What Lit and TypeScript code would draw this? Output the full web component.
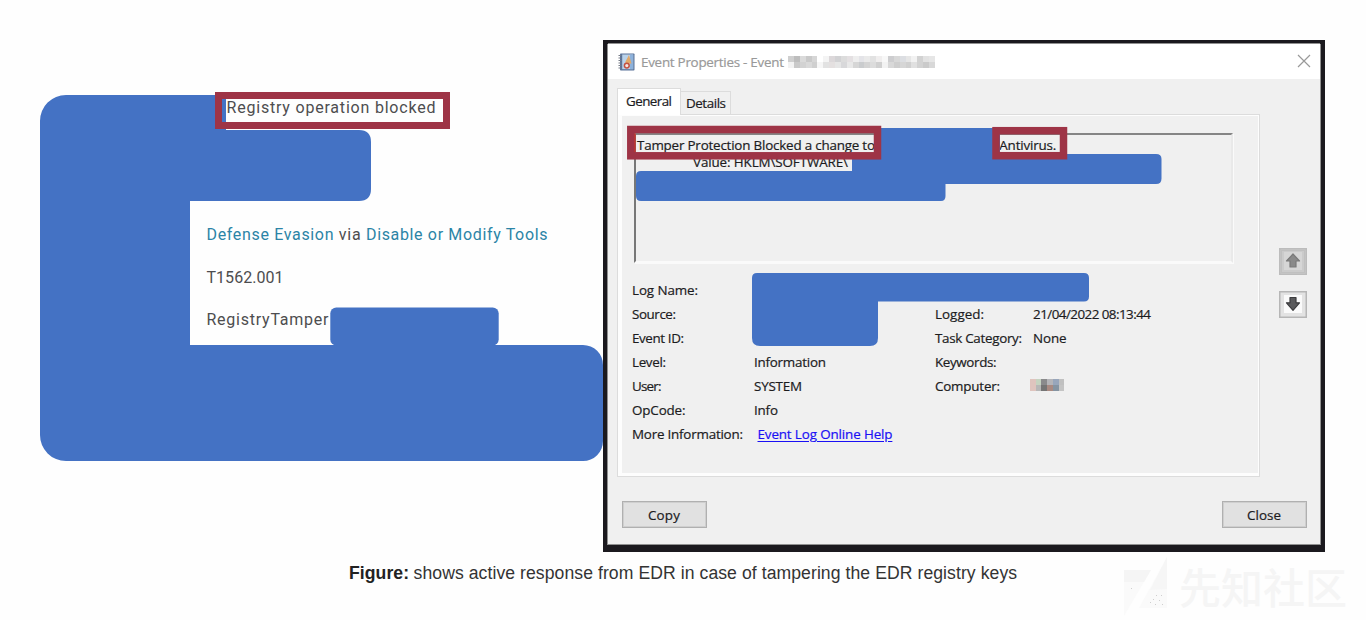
import { LitElement, html, css, svg } from "lit";
import { customElement, property } from "lit/decorators.js";

/** Text run tracked so that it spans a given width. */
@customElement("fit-label")
class FitLabel extends LitElement {
  @property({ type: Number }) span = 0;
  @property() text = "";

  static styles = css`
    :host { display: inline-block; white-space: pre; }
    .run { display: inline-block; text-decoration: inherit; text-underline-offset: inherit; }
  `;

  firstUpdated() {
    const run = this.renderRoot.querySelector(".run") as HTMLElement;
    const natural = run.getBoundingClientRect().width;
    if (this.span) {
      run.style.letterSpacing = `${(this.span - natural) / (this.text.length - 1)}px`;
    }
  }

  render() {
    return html`<span class="run">${this.text}</span>`;
  }
}

const t = (text: string, span: number, cls = "") =>
  html`<fit-label class=${cls} .text=${text} .span=${span}></fit-label>`;

const LEFT_ROWS: [string, number, string, number][] = [
  ["Log Name:", 66, "", 0],
  ["Source:", 44, "", 0],
  ["Event ID:", 52, "", 0],
  ["Level:", 34, "Information", 72],
  ["User:", 29.5, "SYSTEM", 48],
  ["OpCode:", 53.5, "Info", 24],
];
const RIGHT_ROWS: [string, number, string, number][] = [
  ["Logged:", 49, "21/04/2022 08:13:44", 118],
  ["Task Category:", 87, "None", 33.5],
  ["Keywords:", 61.5, "", 0],
  ["Computer:", 65, "", 0],
];

const TITLE_MOSAIC = [
  "#cfcfcf", "#bdbdbd", "#dadada", "#c9c9c9", "#d6d6d6", "#ffffff", "#f4f4f4", "#dcd8da", "#d2d2d4", "#dcdcdc",
  "#e4e0e2", "#eeeeee", "#e4e4e8", "#eaeaea", "#e2e2e2", "#f0eeee", "#f8f8f8", "#cdcdcf", "#d8d8d8", "#dcdee2",
  "#e6e6e6", "#f2f2f2", "#d2d2d2", "#e2e2e2", "#e6e6e6",
];
const TITLE_MOSAIC_LOW = [
  "#f2f2f2", "#c9c9c9", "#d2d2d2", "#d9d9d9", "#cfcfcf", "#f6f6f6", "#e2e2e2", "#e4e0e0", "#e6e6e6", "#d8d8da",
  "#e8e8e8", "#d6d6d6", "#caccce", "#d4d4d4", "#dcdcdc", "#d0d0d0", "#f2f2f2", "#d8d8d8", "#cecece", "#d6d6d6",
  "#d0d0d0", "#e0e0e0", "#d2d2d2", "#cacaca", "#d8d8d8",
];
const HOST_MOSAIC = ["#dfc4be", "#c5d3c0", "#8a8a8c", "#b4b4b8", "#98a6bb", "#c0c0c0"];
const HOST_MOSAIC_LOW = ["#dfc4be", "#b7b7b7", "#757575", "#a98a82", "#8594a2", "#c4c4c4"];

@customElement("app-root")
class AppRoot extends LitElement {
  static styles = css`
    :host { display: block; }
    * { box-sizing: border-box; }
    .page {
      position: relative; width: 1366px; height: 620px; overflow: hidden;
      background: #fefefe; padding: 40px 41px 0 40px;
      display: flex; flex-direction: column;
    }
    .figure { display: flex; height: 512px; }
    .evidence {
      width: 563px; padding: 58px 0 0 166.5px; display: flex; flex-direction: column;
      align-items: flex-start; font: 16px/20px Roboto, sans-serif; color: #4d4d4f;
    }
    .evidence .op { margin-left: 20px; }
    .evidence .row { display: flex; gap: 4.5px; margin-top: 107px; color: #2b84a6; }
    .evidence .via { color: #4d4d4f; }
    .evidence .tech { margin-top: 23px; }
    .evidence .rule { margin-top: 22px; }
    .dialog {
      width: 722px; height: 512px; background: #f0f0f0; border: solid #1b191e;
      border-width: 4px 4px 7px 4px; box-shadow: inset 0 0 0 1px #909090;
      font: 13.4px/16px "Open Sans", sans-serif; color: #1c1c1e;
      -webkit-text-stroke: 0.2px currentColor;
    }
    .titlebar {
      height: 35px; margin: 0 1px; background: #fff; display: flex; align-items: center;
      padding: 0 9px 0 10px; color: #999; box-shadow: 0 -1px 0 #909090;
    }
    .titlebar .name { margin: 0 4px 0 6px; }
    .titlebar .x { margin: -2px 0 0 auto; }
    .body { display: flex; padding: 9px 0 0 10px; }
    .tabs { display: flex; align-items: flex-end; height: 26px; }
    .tab { background: #f0f0f0; border: 1px solid #dcdcdc; border-bottom: 0; }
    .tab.on { width: 64px; height: 27px; margin-bottom: -1px; background: #fff; padding: 4px 0 0 8px; position: relative; }
    .tab.off { width: 50px; height: 23px; padding: 3px 0 0 5px; border-left: 0; }
    .panel { width: 643px; height: 363px; border: 1px solid #dcdcdc; display: flex; }
    .sheet { flex: 1; border: solid #fdfdfd; border-width: 1px 1px 3px 4px; padding: 17px 25px 0 12px; }
    .message {
      height: 130px; border: solid; border-width: 2px 2px 2px 2px;
      border-color: #858585 #e9e9e9 #fafafa #777; padding: 2px 0 0 1px; line-height: 16.5px;
      display: flex; flex-direction: column;
      box-shadow: 1px 1px 0 #fafafa;
    }
    .line { display: flex; }
    .line .anti { margin-left: 124.5px; }
    .line .val { margin-left: 56px; }
    .facts { display: flex; padding-top: 14.6px; line-height: 24.08px; margin-left: -2px; }
    .col { width: 303px; }
    .fact { display: flex; height: 24.08px; align-items: center; }
    .key { width: 122px; }
    .key.wide { width: 125.5px; }
    .col.right { padding-top: 24px; width: 260px; }
    .col.right .key { width: 98px; }
    .link { color: #1a10f5; text-decoration: underline; text-underline-offset: 1.5px; }
    .mosaic { margin: -1px 0 0 -3px; }
    .nav { display: flex; flex-direction: column; gap: 16px; padding: 160px 0 0 19px; }
    .nav svg { display: block; }
    .footer { display: flex; justify-content: space-between; padding: 24px 14px 0 15px; }
    .btn {
      width: 85px; height: 27px; background: #e1e1e1; border: 1px solid #b0b0b0;
      box-shadow: inset 0 0 0 1px #cfcfcf;
      display: flex; justify-content: center; align-items: center; padding: 0 1px 0 0;
    }
    .caption {
      margin-top: 10px; height: 22px; line-height: 22px; padding-left: 309px; white-space: pre;
      font-family: "Liberation Sans", Arial, sans-serif; font-size: 17.6px; color: #333; display: flex;
    }
    .caption .lead { font-weight: 700; margin-right: 4.5px; color: #222; }
    .overlay { position: absolute; left: 0; top: 0; pointer-events: none; }
    .mark {
      position: absolute; left: 1123px; top: 556px; display: flex; align-items: center;
      color: #f5f5f5; font: 500 42px/60px "Noto Sans CJK SC", sans-serif; gap: 11px; height: 60px;
    }
    .mark svg { flex: none; }
  `;

  mosaic(top: string[], low: string[], cell: number, h: number, cls: string) {
    return html`<svg class=${cls} width=${cell * top.length} height=${h * 2} shape-rendering="crispEdges">
      ${top.map((c, i) => svg`<rect x=${i * cell} y="0" width=${cell} height=${h} fill=${c}></rect>`)}
      ${low.map((c, i) => svg`<rect x=${i * cell} y=${h} width=${cell} height=${h} fill=${c}></rect>`)}
    </svg>`;
  }

  eventIcon() {
    return html`<svg width="17" height="18" viewBox="0 0 17 18">
      <rect x="2" y="0.5" width="14.5" height="17" rx="0.8" fill="#5a7399"></rect>
      <rect x="4.2" y="1.5" width="11" height="14.7" fill="#b9d2ea"></rect>
      <rect x="12" y="1.5" width="3.2" height="14.7" fill="#8db2dc"></rect>
      <path d="M0.5 2.5h3M0.5 5h3M0.5 7.5h3M0.5 10h3M0.5 12.5h3M0.5 15h3" stroke="#777d88" stroke-width="1.1"></path>
      <path d="M11 2L13.500 10.500H10L7 9.500Z" fill="#e2a868"></path>
      <circle cx="8.800" cy="12.600" r="2.400" fill="#f4e6e2" stroke="#c4503f" stroke-width="1.500"></circle>
    </svg>`;
  }

  arrow(down: boolean) {
    const edge = down ? "#b6b6b6" : "#bcbcbc";
    return html`<svg width="28" height="27" viewBox="0 0 28 27">
      <rect x="0.75" y="0.75" width="26.5" height="25.5" fill=${down ? "#e3e3e3" : "#cbcbcb"} stroke=${edge} stroke-width="1.5"></rect>
      ${down
        ? svg`<rect x="5" y="4" width="18" height="18" fill="#fafafa"></rect>
            <path d="M11 6.500H17V11.800H20.500L14 19.300L7.500 11.800H11Z" fill="#5a5a5c" stroke="#3c3c3e" stroke-width="1.200" stroke-linejoin="round"></path>`
        : svg`<rect x="2.5" y="2.5" width="23" height="22" fill="none" stroke="#b0b0b0" stroke-width="0.8" stroke-dasharray="1 1"></rect>
            <rect x="5" y="4" width="18" height="18" fill="#d6d6d6"></rect>
            <path d="M14 6L20.500 13H17V19H11V13H7.500Z" fill="#8a8a8a" stroke="#7a7a7a" stroke-width="1.200" stroke-linejoin="round"></path>`}
    </svg>`;
  }

  render() {
    return html`<div class="page">
      <div class="figure">
        <section class="evidence">
          ${t("Registry operation blocked", 209, "op")}
          <div class="row">
            ${t("Defense Evasion", 127)}${t("via", 22, "via")}${t("Disable or Modify Tools", 181.5)}
          </div>
          ${t("T1562.001", 77, "tech")} ${t("RegistryTamper", 122, "rule")}
        </section>
        <section class="dialog">
          <header class="titlebar">
            ${this.eventIcon()} ${t("Event Properties - Event", 143, "name")}
            ${this.mosaic(TITLE_MOSAIC, TITLE_MOSAIC_LOW, 5.88, 6, "")}
            <svg class="x" width="14" height="14"><path d="M1 1L13 13M13 1L1 13" stroke="#999" stroke-width="1.2"></path></svg>
          </header>
          <div class="body">
            <div>
              <div class="tabs">
                <div class="tab on">${t("General", 46)}</div>
                <div class="tab off">${t("Details", 40)}</div>
              </div>
              <div class="panel">
                <div class="sheet">
                  <div class="message">
                    <div class="line">${t("Tamper Protection Blocked a change to", 238)}${t("Antivirus.", 57, "anti")}</div>
                    <div class="line">${t("Value: HKLM\\SOFTWARE\\", 155, "val")}</div>
                  </div>
                  <div class="facts">
                    <div class="col">
                      ${LEFT_ROWS.map(([k, kw, v, vw]) => html`<div class="fact"><div class="key">${t(k, kw)}</div>${v ? t(v, vw) : ""}</div>`)}
                      <div class="fact"><div class="key wide">${t("More Information:", 111)}</div>${t("Event Log Online Help", 135, "link")}</div>
                    </div>
                    <div class="col right">
                      ${RIGHT_ROWS.map(([k, kw, v, vw]) => html`<div class="fact"><div class="key">${t(k, kw)}</div>${v ? t(v, vw) : k === "Computer:" ? this.mosaic(HOST_MOSAIC, HOST_MOSAIC_LOW, 5.7, 6, "mosaic") : ""}</div>`)}
                    </div>
                  </div>
                </div>
              </div>
            </div>
            <nav class="nav">${this.arrow(false)}${this.arrow(true)}</nav>
          </div>
          <footer class="footer">
            <div class="btn">${t("Copy", 32)}</div>
            <div class="btn">${t("Close", 34)}</div>
          </footer>
        </section>
      </div>
      <div class="caption">${t("Figure:", 60, "lead")}${t("shows active response from EDR in case of tampering the EDR registry keys", 603.5)}</div>

      <svg class="overlay" width="1366" height="620" viewBox="0 0 1366 620">
        <g fill="#4472c4">
          <path d="M66 95H226V130H359Q371 130 371 142V189Q371 201 359 201H190V345H583A20 20 0 0 1 603 365V441A20 20 0 0 1 583 461H66A26 26 0 0 1 40 435V121A26 26 0 0 1 66 95Z"></path>
          <rect x="330.300" y="307.500" width="168.400" height="38" rx="6"></rect>
          <path d="M880 128H1000V154H1156Q1161.500 154 1161.500 159V178.500Q1161.500 184 1156 184H945.500V196Q945.500 201 941 201H641Q636 201 636 196V176Q636 171 641 171H852V158H880Z"></path>
          <path d="M757 273H1084Q1089 273 1089 278V296.500Q1089 301.500 1084 301.500H878V338Q878 346 870 346H760Q752 346 752 338V278Q752 273 757 273Z"></path>
        </g>
        <g fill="none" stroke="#9e3446" stroke-width="7">
          <rect x="218.500" y="95.500" width="228" height="30"></rect>
          <rect x="630.800" y="129.500" width="246.700" height="26.300" stroke-width="7.500"></rect>
          <rect x="996" y="130.700" width="67.500" height="25" stroke-width="7.500"></rect>
        </g>
        <path d="M635 133.500V152" stroke="#e8190c" stroke-width="1"></path>
      </svg>

      <div class="mark">
        <svg width="45" height="60" viewBox="0 0 45 60">
          <path d="M1 14H28L1 60Z" fill="#fafafa"></path>
          <path d="M1 14H28L21 26H1Z" fill="#f5f5f5"></path>
          <path d="M44 1V52H16Z" fill="#fafafa"></path>
          <path d="M44 1V33L27 34Z" fill="#f6f6f6"></path>
          <g fill="#cfcfcf">
            <rect x="8" y="32" width="1" height="1"></rect><rect x="33" y="39" width="1" height="1"></rect>
            <rect x="38" y="39" width="1" height="1"></rect><rect x="30" y="43" width="1" height="1"></rect>
            <rect x="36" y="44" width="1" height="1"></rect><rect x="27" y="46" width="1" height="1"></rect>
            <rect x="32" y="48" width="1" height="1"></rect><rect x="39" y="48" width="1" height="1"></rect>
          </g>
        </svg>
        <span>先知社区</span>
      </div>
    </div>`;
  }
}
